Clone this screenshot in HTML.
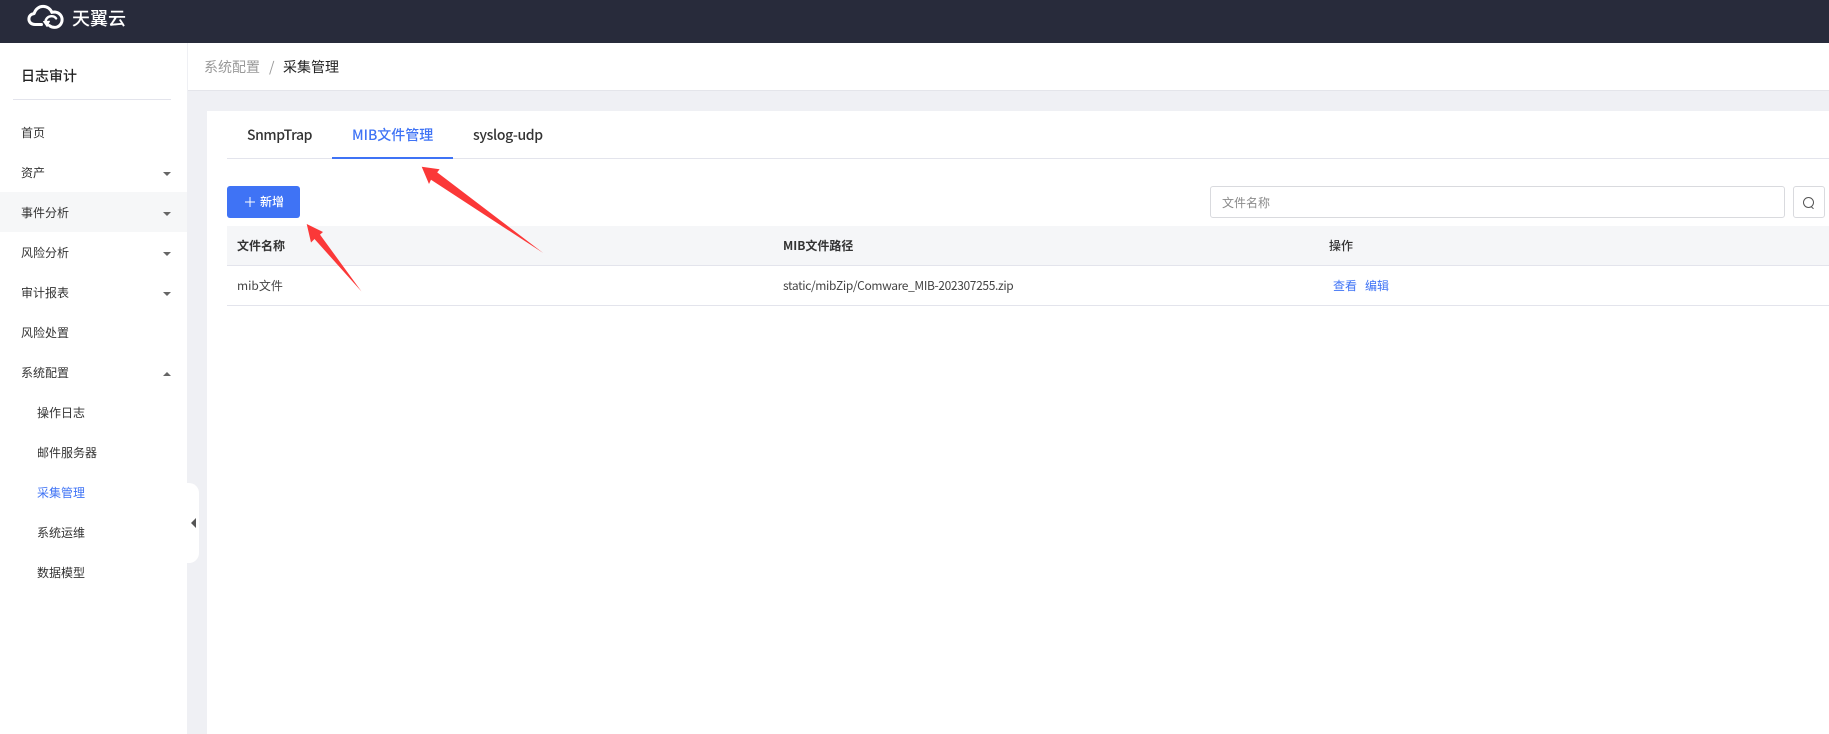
<!DOCTYPE html>
<html lang="zh"><head><meta charset="utf-8"><title>采集管理</title>
<style>
*{box-sizing:border-box;margin:0;padding:0}
html,body{width:1829px;height:734px;overflow:hidden;background:#eff0f4;font-family:"Noto Sans CJK SC","Liberation Sans",sans-serif;color:#333}
.a{position:absolute;white-space:nowrap}
.top{left:0;top:0;width:1829px;height:43px;background:#282b3b}
.side{left:0;top:43px;width:187px;height:691px;background:#fff}
.m{font-size:12px;line-height:16px;color:#333}
.c{width:0;height:0;border-left:4px solid transparent;border-right:4px solid transparent}
.d{border-top:4px solid #666;left:163px}
.u{border-bottom:4px solid #666;left:163px}
.card{left:207px;top:111px;width:1622px;height:623px;background:#fff}
.line{height:1px;background:#e3e4ec}
</style></head><body>
<div class="a top"></div>
<svg class="a" style="left:26px;top:4px" width="41" height="26" viewBox="0 0 40 26" fill="none" stroke="#fff" stroke-width="3" stroke-linecap="round" stroke-linejoin="round">
<path d="M15 20.5H8.5C4.6 20.5 2.4 18 2.4 15C2.4 12 4.6 9.8 7.6 9.6C9 5 12.6 2.4 16.6 2.4C20.6 2.4 24 4.8 25.4 8.4C26.4 8 27.4 8 28.4 8C32.4 8.4 35.6 11.6 35.6 15.6C35.6 20 32.2 23.4 28 23.4C25.8 23.4 24.4 22.8 23 21.6"/>
<path d="M19 18C19 14.6 21.6 12.2 25 12.2C27 12.2 28.6 13 29.6 14.4" stroke-width="2.4"/>
<path d="M17 17.5L23 17.2L20.6 22.6Z" fill="#fff" stroke-width="1"/>
</svg>
<div class="a" style="left:72px;top:5px;font-size:18px;line-height:26px;color:#fff;font-weight:500">天翼云</div>

<div class="a side"></div>
<div class="a" style="left:21px;top:66px;font-size:14px;line-height:20px;font-weight:500;color:#222;">日志审计</div>
<div class="a line" style="left:13px;top:99px;width:158px"></div>
<div class="a" style="left:0;top:192px;width:187px;height:40px;background:#f6f7f8"></div>
<div class="a m" style="left:21px;top:125px">首页</div>
<div class="a m" style="left:21px;top:165px">资产</div><div class="a c d" style="top:172px"></div>
<div class="a m" style="left:21px;top:205px">事件分析</div><div class="a c d" style="top:212px"></div>
<div class="a m" style="left:21px;top:245px">风险分析</div><div class="a c d" style="top:252px"></div>
<div class="a m" style="left:21px;top:285px">审计报表</div><div class="a c d" style="top:292px"></div>
<div class="a m" style="left:21px;top:325px">风险处置</div>
<div class="a m" style="left:21px;top:365px">系统配置</div><div class="a c u" style="top:372px"></div>
<div class="a m" style="left:37px;top:405px">操作日志</div>
<div class="a m" style="left:37px;top:445px">邮件服务器</div>
<div class="a m" style="left:37px;top:485px;color:#3f73f5">采集管理</div>
<div class="a m" style="left:37px;top:525px">系统运维</div>
<div class="a m" style="left:37px;top:565px">数据模型</div>
<div class="a" style="left:187px;top:483px;width:12px;height:80px;background:#fff;border-radius:0 10px 10px 0"></div>
<div class="a" style="left:191px;top:518px;width:0;height:0;border-top:5px solid transparent;border-bottom:5px solid transparent;border-right:5px solid #555"></div>

<div class="a" style="left:188px;top:43px;width:1641px;height:48px;background:#fff;border-bottom:1px solid #e4e5ea"></div>
<div class="a" style="left:204px;top:57px;font-size:14px;line-height:20px;color:#999">系统配置</div>
<div class="a" style="left:269px;top:57px;font-size:14px;line-height:20px;color:#999">/</div>
<div class="a" style="left:283px;top:57px;font-size:14px;line-height:20px;color:#222">采集管理</div>

<div class="a card"></div>
<div class="a" style="left:247px;top:125px;font-size:14px;line-height:20px;font-weight:500;color:#333;letter-spacing:-.42px">SnmpTrap</div>
<div class="a" style="left:352px;top:125px;font-size:14px;line-height:20px;font-weight:500;color:#3f73f5">MIB文件管理</div>
<div class="a" style="left:473px;top:125px;font-size:14px;line-height:20px;font-weight:500;color:#333;letter-spacing:-.35px">syslog-udp</div>
<div class="a line" style="left:227px;top:158px;width:1602px"></div>
<div class="a" style="left:332px;top:157px;width:121px;height:2px;background:#3f73f5"></div>

<div class="a" style="left:227px;top:186px;width:73px;height:32px;background:#3f73f5;border-radius:3px"></div>
<svg class="a" style="left:244px;top:196px" width="12" height="12" viewBox="0 0 12 12" stroke="#fff" stroke-width="1"><path d="M6 1V11M1 6H11"/></svg>
<div class="a" style="left:260px;top:193px;font-size:12px;line-height:17px;color:#fff;font-weight:500">新增</div>

<div class="a" style="left:1210px;top:186px;width:575px;height:32px;border:1px solid #d9dade;border-radius:3px;background:#fff"></div>
<div class="a" style="left:1222px;top:194px;font-size:12px;line-height:17px;color:#8a8a8a">文件名称</div>
<div class="a" style="left:1793px;top:186px;width:32px;height:32px;border:1px solid #d9dade;border-radius:3px;background:#fff"></div>
<svg class="a" style="left:1802px;top:196px" width="14" height="14" viewBox="0 0 14 14" fill="none" stroke="#555" stroke-width="1"><circle cx="6.5" cy="6.5" r="5"/><path d="M9.5 11L11.5 12.8"/></svg>

<div class="a" style="left:227px;top:226px;width:1602px;height:39px;background:#f5f6f8"></div>
<div class="a line" style="left:227px;top:265px;width:1602px"></div>
<div class="a line" style="left:227px;top:305px;width:1602px"></div>
<div class="a" style="left:237px;top:237px;font-size:12px;line-height:17px;font-weight:700;color:#333">文件名称</div>
<div class="a" style="left:783px;top:237px;font-size:12px;line-height:17px;font-weight:700;color:#333">MIB文件路径</div>
<div class="a" style="left:1329px;top:237px;font-size:12px;line-height:17px;font-weight:500;color:#333">操作</div>
<div class="a" style="left:237px;top:277px;font-size:12px;line-height:17px;color:#444">mib文件</div>
<div class="a" style="left:783px;top:277px;font-size:12px;line-height:17px;color:#444;letter-spacing:-.36px">static/mibZip/Comware_MIB-202307255.zip</div>
<div class="a" style="left:1333px;top:277px;font-size:12px;line-height:17px;color:#3f73f5">查看</div>
<div class="a" style="left:1365px;top:277px;font-size:12px;line-height:17px;color:#3f73f5">编辑</div>

<svg class="a" style="left:0;top:0" width="1829" height="734" fill="#fb3838">
<polygon points="421.7,166.7 439.6,169.3 437.2,172.4 543.2,253 431,179.8 429,184"/>
<polygon points="306.7,224 323,232 320,234.6 361.5,291.5 314.5,239 311,242.5"/>
</svg>
</body></html>
